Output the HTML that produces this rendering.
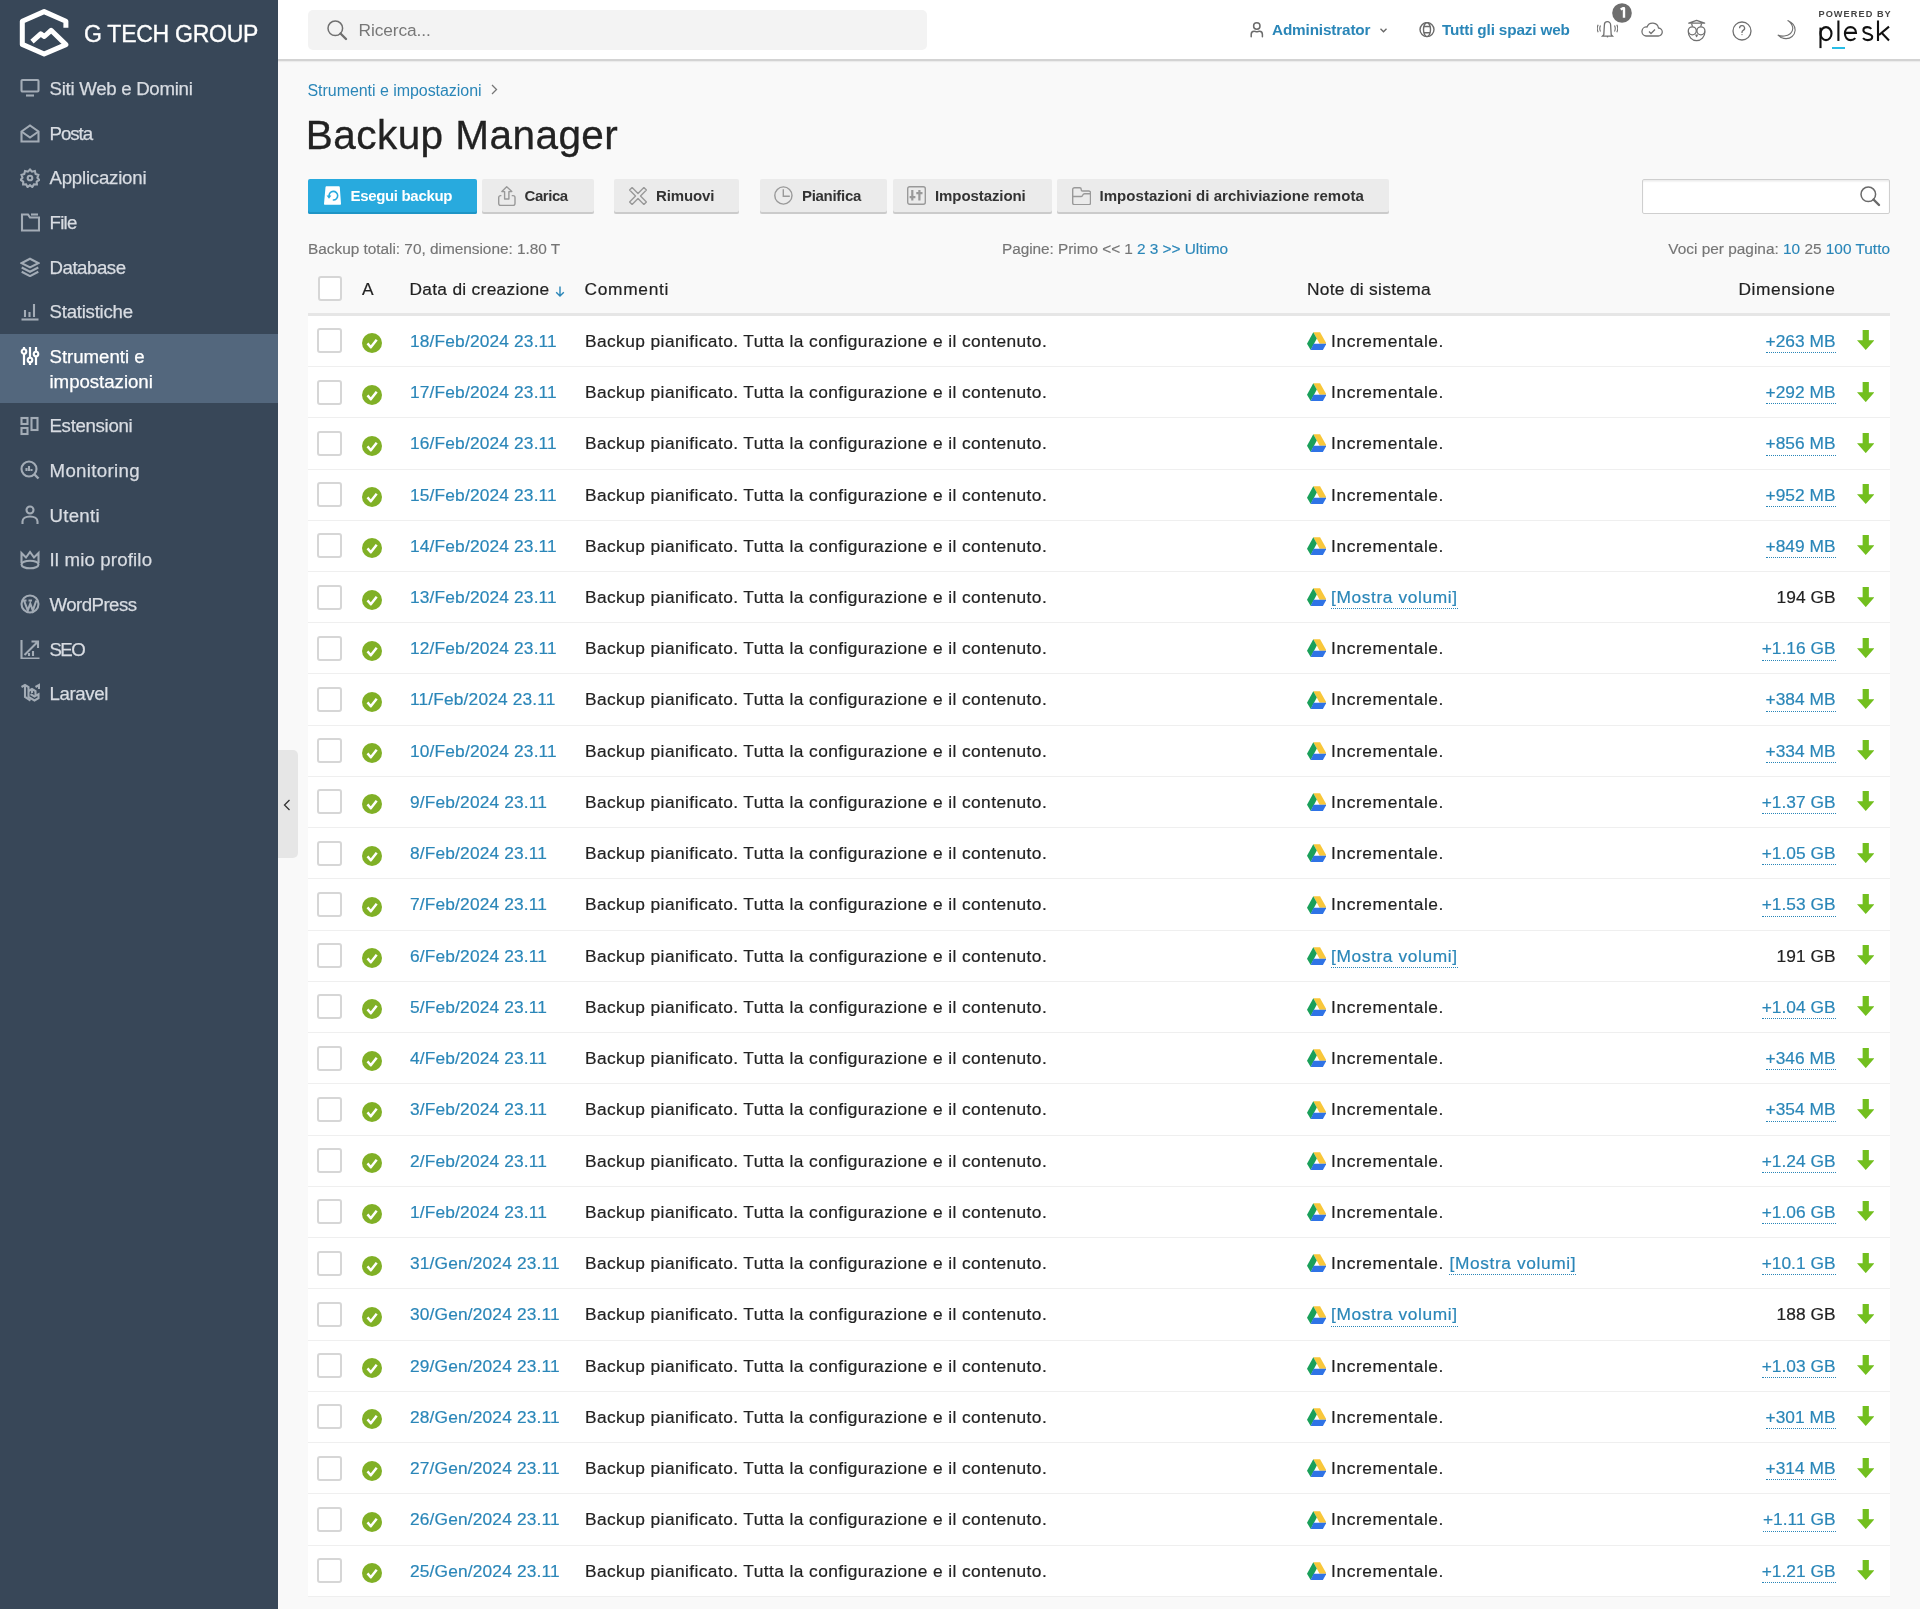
<!DOCTYPE html>
<html><head><meta charset="utf-8">
<style>
*{box-sizing:border-box;margin:0;padding:0}
html,body{width:1920px;height:1609px;overflow:hidden}
body{font-family:"Liberation Sans",sans-serif;background:#f9f9f9;position:relative;color:#222}
.abs{position:absolute}
#side{position:absolute;left:0;top:0;width:278px;height:1609px;background:#384758}
#hdr{position:absolute;left:278px;top:0;width:1642px;height:61px;background:#fff;border-bottom:2px solid #d3d3d3;box-shadow:0 1px 1px rgba(0,0,0,.05)}
.nav{position:absolute;left:0;width:278px;font-size:18.67px;letter-spacing:-0.3px}
.nav .t{position:absolute;left:49.5px;line-height:25px;white-space:nowrap;-webkit-text-stroke:0.25px currentColor}
.nav svg{position:absolute;left:20px;width:20px;height:20px}
.lnk{color:#2a86b8}
.hlink{color:#2a86b8;font-weight:bold;font-size:15.3px;letter-spacing:-0.15px;line-height:22px;white-space:nowrap}
#search{position:absolute;left:308px;top:10px;width:619px;height:40px;background:#f3f3f3;border-radius:5px}
.btn{position:absolute;top:179px;height:34.5px;background:#ebebeb;border-radius:2px;box-shadow:inset 0 -2px 0 #cbcbcb;color:#333;font-weight:bold;font-size:15px;letter-spacing:-0.1px}
.btn .bt{position:absolute;left:42.5px;top:8px;line-height:18px;white-space:nowrap}
.btn.pri{background:#28aade;box-shadow:inset 0 -2px 0 #1f95c6;color:#fff}
.info{position:absolute;top:239px;font-size:15.4px;color:#757575;line-height:20px;white-space:nowrap;-webkit-text-stroke:0.15px currentColor}
.th{position:absolute;top:278px;font-size:17.33px;color:#222;line-height:22px;white-space:nowrap;letter-spacing:0.3px;-webkit-text-stroke:0.2px currentColor}
.row{position:absolute;left:308px;width:1582px;height:51.24px;background:#fff;border-bottom:1.4px solid #efefef}
.cb{position:absolute;left:9.3px;width:24.8px;height:25px;border:2px solid #d6d6d6;border-radius:3px;background:#fff}
.row .ok{position:absolute;left:54px;top:17.5px;width:20px;height:20px}
.c{position:absolute;top:14px;font-size:17.33px;line-height:22px;white-space:nowrap;-webkit-text-stroke:0.2px currentColor}
.dt{left:102px;letter-spacing:0.16px}
.cm{left:277px;letter-spacing:0.42px;color:#222}
.gd{position:absolute;left:998.5px;top:16.2px;width:19.5px;height:18px}
.nt{left:1023px;letter-spacing:0.62px;color:#222}
.sz{right:54.5px;text-align:right;color:#222;letter-spacing:0.02px}
.dot{border-bottom:1.3px dotted #2a86b8;padding-bottom:1.3px}
.dl{position:absolute;left:1548.5px;top:14.5px;width:17.5px;height:20.6px}
</style></head>
<body>
<div id="wrap" style="position:absolute;left:0;top:0;width:1920px;height:1609px;overflow:hidden;will-change:transform">
<div id="side">
<svg class="abs" style="left:0;top:0" width="278" height="60" viewBox="0 0 278 60">
<path d="M65.9 27.8V21.2L44.1 11.6 22.3 21.2V44.4L44.1 54 65.9 44.6 51.1 30.3 44.3 36.5 40.7 33.9 32 41.6" fill="none" stroke="#fff" stroke-width="5" stroke-linejoin="round"/>
</svg>
<div class="abs" style="left:84px;top:20px;font-size:23px;color:#fff;letter-spacing:-0.25px;line-height:28px;white-space:nowrap;-webkit-text-stroke:0.35px #fff">G TECH GROUP</div>
<div class="nav" style="top:66.00px;height:44.63px;color:#d8dce2"><svg viewBox="0 0 20 20" style="top:12.3px" fill="none" stroke="#a3acb6" stroke-width="2.1"><rect x="1.5" y="2" width="17" height="11.5" rx="1"/><path d="M6 17.5h8"/></svg><div class="t" style="top:10px;letter-spacing:-0.29px">Siti Web e Domini</div></div>
<div class="nav" style="top:110.63px;height:44.63px;color:#d8dce2"><svg viewBox="0 0 20 20" style="top:12.3px" fill="none" stroke="#a3acb6" stroke-width="2.1"><path d="M1.5 8.5L10 2.5l8.5 6v10h-17z"/><path d="M1.5 8.5l8.5 6 8.5-6"/></svg><div class="t" style="top:10px;letter-spacing:-1.05px">Posta</div></div>
<div class="nav" style="top:155.26px;height:44.63px;color:#d8dce2"><svg viewBox="0 0 20 20" style="top:12.3px" fill="none" stroke="#a3acb6" stroke-width="2.1"><circle cx="10" cy="10" r="2.3"/><path d="M10 1.5l2 2.2 2.9-.7.7 2.9 2.8 1-1 2.8 1.9 2.3-2.6 1.5.2 3-3-.1-1.6 2.6-2.3-1.9-2.4 1.9-1.5-2.6-3 .1.1-3-2.6-1.5 1.9-2.3-1-2.8 2.8-1 .7-2.9 2.9.7z"/></svg><div class="t" style="top:10px;letter-spacing:-0.23px">Applicazioni</div></div>
<div class="nav" style="top:199.89px;height:44.63px;color:#d8dce2"><svg viewBox="0 0 20 20" style="top:12.3px" fill="none" stroke="#a3acb6" stroke-width="2.1"><path d="M2 2.5v16h17v-13h-9l-2-3z"/><path d="M11 2.5h7"/></svg><div class="t" style="top:10px;letter-spacing:-0.77px">File</div></div>
<div class="nav" style="top:244.52px;height:44.63px;color:#d8dce2"><svg viewBox="0 0 20 20" style="top:12.3px" fill="none" stroke="#a3acb6" stroke-width="2.1"><path d="M10 1.8l8.3 4.3-8.3 4.3-8.3-4.3z"/><path d="M1.7 10.5l8.3 4.3 8.3-4.3"/><path d="M1.7 14.8l8.3 4.3 8.3-4.3"/></svg><div class="t" style="top:10px;letter-spacing:-0.47px">Database</div></div>
<div class="nav" style="top:289.15px;height:44.63px;color:#d8dce2"><svg viewBox="0 0 20 20" style="top:12.3px" fill="none" stroke="#a3acb6" stroke-width="2.1"><path d="M1.5 18.5h17"/><path d="M5 16V9M9.5 16V11M14 16V3"/></svg><div class="t" style="top:10px;letter-spacing:-0.25px">Statistiche</div></div>
<div class="nav" style="top:333.78px;height:69.0px;background:#53677d;color:#ffffff"><svg viewBox="0 0 20 20" style="top:12.3px" fill="none" stroke="#ffffff" stroke-width="2.1"><path d="M4 1v18M10 1v18M16 1v18" stroke-width="2.2"/><circle cx="4" cy="5.5" r="2.3" fill="#53677d"/><circle cx="10" cy="14" r="2.3" fill="#53677d"/><circle cx="16" cy="8" r="2.3" fill="#53677d"/></svg><div class="t" style="top:10px;letter-spacing:-0.03px">Strumenti e<br>impostazioni</div></div>
<div class="nav" style="top:403.41px;height:44.63px;color:#d8dce2"><svg viewBox="0 0 20 20" style="top:12.3px" fill="none" stroke="#a3acb6" stroke-width="2.1"><rect x="1.5" y="2" width="6" height="6"/><rect x="1.5" y="12" width="6" height="6"/><rect x="11.5" y="2" width="6" height="12"/></svg><div class="t" style="top:10px;letter-spacing:-0.32px">Estensioni</div></div>
<div class="nav" style="top:448.04px;height:44.63px;color:#d8dce2"><svg viewBox="0 0 20 20" style="top:12.3px" fill="none" stroke="#a3acb6" stroke-width="2.1"><circle cx="9" cy="9" r="7.5"/><path d="M14.5 14.5l4 4" stroke-width="2.4"/><path d="M6.5 11V8M9 11V6M11.5 11V9"/></svg><div class="t" style="top:10px;letter-spacing:0.34px">Monitoring</div></div>
<div class="nav" style="top:492.67px;height:44.63px;color:#d8dce2"><svg viewBox="0 0 20 20" style="top:12.3px" fill="none" stroke="#a3acb6" stroke-width="2.1"><circle cx="10" cy="5" r="3.5"/><path d="M2.5 19v-2.5c0-3 3-5 7.5-5s7.5 2 7.5 5V19"/></svg><div class="t" style="top:10px;letter-spacing:0.26px">Utenti</div></div>
<div class="nav" style="top:537.30px;height:44.63px;color:#d8dce2"><svg viewBox="0 0 20 20" style="top:12.3px" fill="none" stroke="#a3acb6" stroke-width="2.1"><path d="M1.5 13V3l4.5 4.5L10 2l4 5.5L18.5 3v10"/><ellipse cx="10" cy="14.5" rx="8.5" ry="3.8"/></svg><div class="t" style="top:10px;letter-spacing:0.15px">Il mio profilo</div></div>
<div class="nav" style="top:581.93px;height:44.63px;color:#d8dce2"><svg viewBox="0 0 20 20" style="top:12.3px" fill="none" stroke="#a3acb6" stroke-width="2.1"><circle cx="10" cy="10" r="8.5"/><path d="M4 6.5l3.8 10 2.5-7 2.5 7 3.5-10M3 6.5h3.5M8.5 6.5h3.5"/></svg><div class="t" style="top:10px;letter-spacing:-0.55px">WordPress</div></div>
<div class="nav" style="top:626.56px;height:44.63px;color:#d8dce2"><svg viewBox="0 0 20 20" style="top:12.3px" fill="none" stroke="#a3acb6" stroke-width="2.1"><path d="M1.5 1v18.5h18"/><path d="M4.5 16L17.5 3M11.5 2.5h6.5V9"/><path d="M9 17v-3M13 17v-5"/></svg><div class="t" style="top:10px;letter-spacing:-1.60px">SEO</div></div>
<div class="nav" style="top:671.19px;height:44.63px;color:#d8dce2"><svg viewBox="0 0 20 20" style="top:12.3px" fill="none" stroke="#a3acb6" stroke-width="2.1"><path d="M1.5 4l3.5-2 3.5 2v10l6 3.5 4-2.3v-4l-4 2.3-4-2.3"/><path d="M5 2v12l5.5 3.5M8.5 8l3.5-2 3.5 2v4M12 6v4M15.5 4l3.5-2v4"/></svg><div class="t" style="top:10px;letter-spacing:-0.38px">Laravel</div></div>
</div>
<div id="hdr"></div>
<div id="search"></div>
<svg class="abs" style="left:327px;top:20px" width="21" height="21" viewBox="0 0 21 21" fill="none" stroke="#707070" stroke-width="1.5"><circle cx="8.3" cy="8.3" r="7.3"/><path d="M13.5 13.5l5.5 5.5" stroke-width="2.4" stroke-linecap="round"/></svg>
<div class="abs" style="left:358.5px;top:19px;font-size:17.33px;color:#777;line-height:22px;letter-spacing:-0.1px">Ricerca...</div>

<svg class="abs" style="left:1249px;top:22px" width="15" height="16" viewBox="0 0 15 16" fill="none" stroke="#6b6b6b" stroke-width="1.5" stroke-linecap="round"><circle cx="7.8" cy="4" r="3.2"/><path d="M2.2 14.7v-2.2c0-2.2 1.3-3.3 2.8-3.3 1 0 1.8.5 2.8.5s1.8-.5 2.8-.5c1.5 0 2.8 1.1 2.8 3.3v2.2"/></svg>
<div class="abs hlink" style="left:1272px;top:19px">Administrator</div>
<svg class="abs" style="left:1380px;top:28px" width="7" height="5" viewBox="0 0 7 5" fill="none" stroke="#666" stroke-width="1.3"><path d="M0.5 0.8l3 3 3-3"/></svg>
<svg class="abs" style="left:1419px;top:22px" width="16" height="16" viewBox="0 0 16 16" fill="none" stroke="#6b6b6b" stroke-width="1.4"><circle cx="8" cy="7.6" r="7"/><ellipse cx="8" cy="7.6" rx="3.5" ry="7"/><path d="M4.7 4.5h6.6M4.7 10.7h6.6"/></svg>
<div class="abs hlink" style="left:1442px;top:19px">Tutti gli spazi web</div>
<svg class="abs" style="left:1597px;top:20px" width="21" height="18" viewBox="0 0 21 18" fill="none" stroke="#707070" stroke-width="1.3"><path d="M6.8 14.8l.6-10a3.1 3.1 0 0 1 6.2 0l.6 10 1.3 1.3H5.5z"/><path d="M10.5 16.1v1.3"/><path d="M3.5 5.5c-.9 1.8-.9 4.2 0 6M1.2 4.8c-1.2 2.3-1.2 5.2 0 7.5M17.5 5.5c.9 1.8.9 4.2 0 6M19.8 4.8c1.2 2.3 1.2 5.2 0 7.5" stroke-width="1.1"/></svg>
<svg class="abs" style="left:1612px;top:2.5px" width="20" height="20" viewBox="0 0 20 20"><circle cx="10" cy="10" r="9.8" fill="#6e6e6e"/><path d="M8.7 6.6l2.2-1.4h1.1v9.6" fill="none" stroke="#fff" stroke-width="2.4" stroke-linejoin="round"/></svg>
<svg class="abs" style="left:1641px;top:22px" width="22" height="15" viewBox="0 0 22 15" fill="none" stroke="#707070" stroke-width="1.3"><path d="M5 14h12a4 4 0 0 0 .5-8 6 6 0 0 0-11.5-1A4.5 4.5 0 0 0 5 14z"/><path d="M8 9.5l2 2 4-4"/></svg>
<svg class="abs" style="left:1687px;top:19px" width="20" height="23" viewBox="0 0 20 23" fill="none" stroke="#707070" stroke-width="1.3" stroke-linejoin="round"><path d="M1.8 4.2L9.6 1.3 17.6 4.2z"/><path d="M4.6 4.6l.9 3M14.6 4.6l-.9 3"/><circle cx="5.3" cy="11.8" r="4"/><circle cx="13.9" cy="11.8" r="4"/><path d="M1.3 12.5C1.3 18 5 21.6 9.6 21.6S17.9 18 17.9 12.5"/><path d="M8.7 15.6l.9 2 .9-2"/></svg>
<svg class="abs" style="left:1732px;top:21px" width="20" height="20" viewBox="0 0 20 20" fill="none" stroke="#707070" stroke-width="1.3"><circle cx="10" cy="10" r="9"/><path d="M7.6 7.2a2.5 2.5 0 1 1 3.6 2.2c-.8.4-1.2.9-1.2 1.8v.9"/><circle cx="10" cy="13.6" r=".7" fill="#707070" stroke="none"/></svg>
<svg class="abs" style="left:1777px;top:20px" width="19" height="20" viewBox="0 0 19 20" fill="none" stroke="#707070" stroke-width="1.1"><path d="M10.6 0.4C15.5 2.5 18.3 6.5 18.1 10.5 17.8 15.5 13.5 18.8 8.8 18.6 5.5 18.5 2.5 17 0.8 15 4.5 16.8 10 16.5 13.5 13.5 16.8 10.3 17 5 10.6 0.4z"/></svg>
<div class="abs" style="left:1818.5px;top:8.5px;font-size:9.2px;letter-spacing:1.05px;color:#444;font-weight:bold;line-height:11px;white-space:nowrap">POWERED BY</div>
<svg class="abs" style="left:1810px;top:15px" width="90" height="40" viewBox="0 0 90 40" fill="none" stroke="#111" stroke-width="2.1"><path d="M10.5 33.1V12.6"/><ellipse cx="16" cy="18.6" rx="5.5" ry="6.5"/><path d="M28.4 5.5v20.4"/><path d="M34.9 17.9h11.1c0-3.4-2.4-5.8-5.5-5.8-3.3 0-5.6 2.9-5.6 6.5s2.4 6.5 5.8 6.5c2 0 3.5-.8 4.6-2"/><path transform="translate(-1.2 0)" d="M62.5 13.9c-.9-1-2.3-1.8-4-1.8-2.3 0-3.9 1.3-3.9 3.1 0 4.5 8.8 2.6 8.8 6.6 0 2-1.9 3.3-4.4 3.3-2 0-3.7-.8-4.8-2"/><path d="M68 5.5v20.4M79 11.6L69 20M71.6 17.8L79 25.4"/></svg>
<div class="abs" style="left:1832px;top:46.5px;width:13px;height:2px;background:#27bde6"></div>

<div class="abs lnk" style="left:307.5px;top:80.5px;font-size:16px;line-height:20px;letter-spacing:-0.05px;white-space:nowrap">Strumenti e impostazioni</div>
<svg class="abs" style="left:491px;top:84px" width="7" height="11" viewBox="0 0 7 11" fill="none" stroke="#777" stroke-width="1.3"><path d="M1 1l4.5 4.5L1 10"/></svg>
<div class="abs" style="left:305.8px;top:111px;font-size:40.5px;color:#222;line-height:48px;letter-spacing:0.45px;-webkit-text-stroke:0.3px #222;white-space:nowrap">Backup Manager</div>
<div class="btn pri" style="left:308px;width:169px"><svg class="abs" style="left:15.8px;top:7px" width="18" height="19" viewBox="0 0 18 19"><path d="M2.6 0.2h12.1c.6 0 1.1.5 1.1 1.1l1.2 16.5c0 .6-.4 1-1 1H1c-.6 0-1-.4-1-1L1.5 1.3c0-.6.5-1.1 1.1-1.1z" fill="#fff"/><path d="M9.4 14A4.3 4.3 0 1 0 5.1 10" fill="none" stroke="#28aade" stroke-width="1.6" stroke-linecap="round"/><path d="M2.6 9.5h4.8L5 12.8z" fill="#28aade"/></svg><span class="bt" style="letter-spacing:-0.33px">Esegui backup</span></div><div class="btn" style="left:482px;width:112px"><svg class="abs" style="left:16px;top:7px" width="18" height="20" viewBox="0 0 18 20" fill="none" stroke="#999" stroke-width="1.4" stroke-linejoin="round"><path d="M8.7 0.8L3.9 5.6h2.7v7.4h4.3V5.6h2.9z"/><path d="M3.4 9.6H2.7a2 2 0 0 0-2 2v5.9a2 2 0 0 0 2 2h12.3a2 2 0 0 0 2-2v-5.9a2 2 0 0 0-2-2h-1.3"/></svg><span class="bt" style="letter-spacing:-0.45px">Carica</span></div><div class="btn" style="left:613.5px;width:125.5px"><svg class="abs" style="left:15.5px;top:8px" width="18" height="18" viewBox="0 0 18 18" fill="none" stroke="#999" stroke-width="1.4" stroke-linejoin="round"><path d="M3.1 0.6 9.0 6.5 14.9 0.6 17.4 3.1 11.5 9.0 17.4 14.9 14.9 17.4 9.0 11.5 3.1 17.4 0.6 14.9 6.5 9.0 0.6 3.1z"/></svg><span class="bt" style="letter-spacing:-0.12px">Rimuovi</span></div><div class="btn" style="left:759.5px;width:127.5px"><svg class="abs" style="left:14.5px;top:6.5px" width="19" height="19" viewBox="0 0 19 19" fill="none" stroke="#999" stroke-width="1.4"><circle cx="9.4" cy="9.5" r="8.6"/><path d="M9.3 3.2v7h6.5"/></svg><span class="bt" style="letter-spacing:-0.3px">Pianifica</span></div><div class="btn" style="left:892.5px;width:159px"><svg class="abs" style="left:14.5px;top:7px" width="19" height="19" viewBox="0 0 19 19" fill="none" stroke="#999" stroke-width="1.4"><rect x="0.7" y="0.7" width="17.6" height="17.6" rx="2"/><path d="M5.3 4v10.6M12.4 4v10.6" stroke-width="2.2"/><path d="M2.6 11.1h5.8M9.3 7.1h6.2" stroke-width="2.2"/></svg><span class="bt" style="letter-spacing:-0.08px">Impostazioni</span></div><div class="btn" style="left:1057px;width:332px"><svg class="abs" style="left:14.7px;top:8px" width="19" height="18" viewBox="0 0 19 18" fill="none" stroke="#999" stroke-width="1.4"><path d="M0.7 2.5a1.8 1.8 0 0 1 1.8-1.8h5.2a1.5 1.5 0 0 1 1.5 1.5v.5a1.3 1.3 0 0 0 1.3 1.3h6.2a1.8 1.8 0 0 1 1.8 1.8v10.1a1.8 1.8 0 0 1-1.8 1.8H2.5a1.8 1.8 0 0 1-1.8-1.8z"/><path d="M0.7 9.5h8.3c.8 0 1.2-.5 1.6-1.2.5-1 1-1.6 2-1.6h5.7"/></svg><span class="bt" style="letter-spacing:0.05px">Impostazioni di archiviazione remota</span></div>
<div class="abs" style="left:1641.8px;top:179px;width:248.2px;height:34.5px;background:#fff;border:1.4px solid #cfcfcf;border-radius:2px;box-shadow:inset 0 1.5px 1.5px rgba(0,0,0,.08)"></div>
<svg class="abs" style="left:1860px;top:186px" width="21" height="21" viewBox="0 0 21 21" fill="none" stroke="#6a6a6a" stroke-width="1.5"><circle cx="8.3" cy="8.3" r="7.3"/><path d="M13.5 13.5l5.5 5.5" stroke-width="2.4" stroke-linecap="round"/></svg>
<div class="info" style="left:308px;letter-spacing:-0.02px">Backup totali: 70, dimensione: 1.80 T</div>
<div class="info" style="left:1002px;letter-spacing:-0.05px">Pagine: Primo &lt;&lt; 1 <span class="lnk">2</span> <span class="lnk">3</span> <span class="lnk">&gt;&gt;</span> <span class="lnk">Ultimo</span></div>
<div class="info" style="right:30px;letter-spacing:0.0px">Voci per pagina: <span class="lnk">10</span> 25 <span class="lnk">100</span> <span class="lnk">Tutto</span></div>
<div class="cb" style="left:317.5px;top:275.5px;position:absolute"></div>
<div class="th" style="left:362px">A</div>
<div class="th" style="left:409.5px">Data di creazione</div>
<svg class="abs" style="left:555px;top:285.5px" width="10" height="11" viewBox="0 0 10 11" fill="none" stroke="#2a86b8" stroke-width="1.4"><path d="M5 0.5v9.5M1.2 6.3L5 10 8.8 6.3"/></svg>
<div class="th" style="left:584.5px;letter-spacing:0.7px">Commenti</div>
<div class="th" style="left:1307px">Note di sistema</div>
<div class="th" style="right:84.5px;letter-spacing:0.55px">Dimensione</div>
<div class="abs" style="left:308px;top:313.3px;width:1582px;height:2.5px;background:#e6e6e6"></div>
<div class="row" style="top:315.80px"><div class="cb" style="top:12.5px"></div><svg class="ok" viewBox="0 0 20 20"><circle cx="10" cy="10" r="10" fill="#80b026"/><path d="M5.5 10.4l3.3 3.8 5.9-7.5" fill="none" stroke="#fff" stroke-width="2.5" stroke-linejoin="round"/></svg><div class="c dt lnk">18/Feb/2024 23.11</div><div class="c cm">Backup pianificato. Tutta la configurazione e il contenuto.</div><svg class="gd" viewBox="0 0 19.5 18"><path d="M6.3 0.3h6.8l6.4 11.4h-6.9z" fill="#f9c73a"/><path d="M6.3 0.3L9.8 6.4 3.7 18 0 11.7z" fill="#1aa05a"/><path d="M6.5 11.7h13l-3.6 6.3H3.7z" fill="#2f73e6"/></svg><div class="c nt">Incrementale.</div><div class="c sz"><span class="dot lnk">+263 MB</span></div><svg class="dl" viewBox="0 0 18 21"><path d="M5.8 0h6.4v10.5H18L9 20.6 0 10.5h5.8z" fill="#72bf1e"/></svg></div>
<div class="row" style="top:367.04px"><div class="cb" style="top:12.5px"></div><svg class="ok" viewBox="0 0 20 20"><circle cx="10" cy="10" r="10" fill="#80b026"/><path d="M5.5 10.4l3.3 3.8 5.9-7.5" fill="none" stroke="#fff" stroke-width="2.5" stroke-linejoin="round"/></svg><div class="c dt lnk">17/Feb/2024 23.11</div><div class="c cm">Backup pianificato. Tutta la configurazione e il contenuto.</div><svg class="gd" viewBox="0 0 19.5 18"><path d="M6.3 0.3h6.8l6.4 11.4h-6.9z" fill="#f9c73a"/><path d="M6.3 0.3L9.8 6.4 3.7 18 0 11.7z" fill="#1aa05a"/><path d="M6.5 11.7h13l-3.6 6.3H3.7z" fill="#2f73e6"/></svg><div class="c nt">Incrementale.</div><div class="c sz"><span class="dot lnk">+292 MB</span></div><svg class="dl" viewBox="0 0 18 21"><path d="M5.8 0h6.4v10.5H18L9 20.6 0 10.5h5.8z" fill="#72bf1e"/></svg></div>
<div class="row" style="top:418.28px"><div class="cb" style="top:12.5px"></div><svg class="ok" viewBox="0 0 20 20"><circle cx="10" cy="10" r="10" fill="#80b026"/><path d="M5.5 10.4l3.3 3.8 5.9-7.5" fill="none" stroke="#fff" stroke-width="2.5" stroke-linejoin="round"/></svg><div class="c dt lnk">16/Feb/2024 23.11</div><div class="c cm">Backup pianificato. Tutta la configurazione e il contenuto.</div><svg class="gd" viewBox="0 0 19.5 18"><path d="M6.3 0.3h6.8l6.4 11.4h-6.9z" fill="#f9c73a"/><path d="M6.3 0.3L9.8 6.4 3.7 18 0 11.7z" fill="#1aa05a"/><path d="M6.5 11.7h13l-3.6 6.3H3.7z" fill="#2f73e6"/></svg><div class="c nt">Incrementale.</div><div class="c sz"><span class="dot lnk">+856 MB</span></div><svg class="dl" viewBox="0 0 18 21"><path d="M5.8 0h6.4v10.5H18L9 20.6 0 10.5h5.8z" fill="#72bf1e"/></svg></div>
<div class="row" style="top:469.52px"><div class="cb" style="top:12.5px"></div><svg class="ok" viewBox="0 0 20 20"><circle cx="10" cy="10" r="10" fill="#80b026"/><path d="M5.5 10.4l3.3 3.8 5.9-7.5" fill="none" stroke="#fff" stroke-width="2.5" stroke-linejoin="round"/></svg><div class="c dt lnk">15/Feb/2024 23.11</div><div class="c cm">Backup pianificato. Tutta la configurazione e il contenuto.</div><svg class="gd" viewBox="0 0 19.5 18"><path d="M6.3 0.3h6.8l6.4 11.4h-6.9z" fill="#f9c73a"/><path d="M6.3 0.3L9.8 6.4 3.7 18 0 11.7z" fill="#1aa05a"/><path d="M6.5 11.7h13l-3.6 6.3H3.7z" fill="#2f73e6"/></svg><div class="c nt">Incrementale.</div><div class="c sz"><span class="dot lnk">+952 MB</span></div><svg class="dl" viewBox="0 0 18 21"><path d="M5.8 0h6.4v10.5H18L9 20.6 0 10.5h5.8z" fill="#72bf1e"/></svg></div>
<div class="row" style="top:520.76px"><div class="cb" style="top:12.5px"></div><svg class="ok" viewBox="0 0 20 20"><circle cx="10" cy="10" r="10" fill="#80b026"/><path d="M5.5 10.4l3.3 3.8 5.9-7.5" fill="none" stroke="#fff" stroke-width="2.5" stroke-linejoin="round"/></svg><div class="c dt lnk">14/Feb/2024 23.11</div><div class="c cm">Backup pianificato. Tutta la configurazione e il contenuto.</div><svg class="gd" viewBox="0 0 19.5 18"><path d="M6.3 0.3h6.8l6.4 11.4h-6.9z" fill="#f9c73a"/><path d="M6.3 0.3L9.8 6.4 3.7 18 0 11.7z" fill="#1aa05a"/><path d="M6.5 11.7h13l-3.6 6.3H3.7z" fill="#2f73e6"/></svg><div class="c nt">Incrementale.</div><div class="c sz"><span class="dot lnk">+849 MB</span></div><svg class="dl" viewBox="0 0 18 21"><path d="M5.8 0h6.4v10.5H18L9 20.6 0 10.5h5.8z" fill="#72bf1e"/></svg></div>
<div class="row" style="top:572.00px"><div class="cb" style="top:12.5px"></div><svg class="ok" viewBox="0 0 20 20"><circle cx="10" cy="10" r="10" fill="#80b026"/><path d="M5.5 10.4l3.3 3.8 5.9-7.5" fill="none" stroke="#fff" stroke-width="2.5" stroke-linejoin="round"/></svg><div class="c dt lnk">13/Feb/2024 23.11</div><div class="c cm">Backup pianificato. Tutta la configurazione e il contenuto.</div><svg class="gd" viewBox="0 0 19.5 18"><path d="M6.3 0.3h6.8l6.4 11.4h-6.9z" fill="#f9c73a"/><path d="M6.3 0.3L9.8 6.4 3.7 18 0 11.7z" fill="#1aa05a"/><path d="M6.5 11.7h13l-3.6 6.3H3.7z" fill="#2f73e6"/></svg><div class="c nt"><span class="dot lnk">[Mostra volumi]</span></div><div class="c sz">194 GB</div><svg class="dl" viewBox="0 0 18 21"><path d="M5.8 0h6.4v10.5H18L9 20.6 0 10.5h5.8z" fill="#72bf1e"/></svg></div>
<div class="row" style="top:623.24px"><div class="cb" style="top:12.5px"></div><svg class="ok" viewBox="0 0 20 20"><circle cx="10" cy="10" r="10" fill="#80b026"/><path d="M5.5 10.4l3.3 3.8 5.9-7.5" fill="none" stroke="#fff" stroke-width="2.5" stroke-linejoin="round"/></svg><div class="c dt lnk">12/Feb/2024 23.11</div><div class="c cm">Backup pianificato. Tutta la configurazione e il contenuto.</div><svg class="gd" viewBox="0 0 19.5 18"><path d="M6.3 0.3h6.8l6.4 11.4h-6.9z" fill="#f9c73a"/><path d="M6.3 0.3L9.8 6.4 3.7 18 0 11.7z" fill="#1aa05a"/><path d="M6.5 11.7h13l-3.6 6.3H3.7z" fill="#2f73e6"/></svg><div class="c nt">Incrementale.</div><div class="c sz"><span class="dot lnk">+1.16 GB</span></div><svg class="dl" viewBox="0 0 18 21"><path d="M5.8 0h6.4v10.5H18L9 20.6 0 10.5h5.8z" fill="#72bf1e"/></svg></div>
<div class="row" style="top:674.48px"><div class="cb" style="top:12.5px"></div><svg class="ok" viewBox="0 0 20 20"><circle cx="10" cy="10" r="10" fill="#80b026"/><path d="M5.5 10.4l3.3 3.8 5.9-7.5" fill="none" stroke="#fff" stroke-width="2.5" stroke-linejoin="round"/></svg><div class="c dt lnk">11/Feb/2024 23.11</div><div class="c cm">Backup pianificato. Tutta la configurazione e il contenuto.</div><svg class="gd" viewBox="0 0 19.5 18"><path d="M6.3 0.3h6.8l6.4 11.4h-6.9z" fill="#f9c73a"/><path d="M6.3 0.3L9.8 6.4 3.7 18 0 11.7z" fill="#1aa05a"/><path d="M6.5 11.7h13l-3.6 6.3H3.7z" fill="#2f73e6"/></svg><div class="c nt">Incrementale.</div><div class="c sz"><span class="dot lnk">+384 MB</span></div><svg class="dl" viewBox="0 0 18 21"><path d="M5.8 0h6.4v10.5H18L9 20.6 0 10.5h5.8z" fill="#72bf1e"/></svg></div>
<div class="row" style="top:725.72px"><div class="cb" style="top:12.5px"></div><svg class="ok" viewBox="0 0 20 20"><circle cx="10" cy="10" r="10" fill="#80b026"/><path d="M5.5 10.4l3.3 3.8 5.9-7.5" fill="none" stroke="#fff" stroke-width="2.5" stroke-linejoin="round"/></svg><div class="c dt lnk">10/Feb/2024 23.11</div><div class="c cm">Backup pianificato. Tutta la configurazione e il contenuto.</div><svg class="gd" viewBox="0 0 19.5 18"><path d="M6.3 0.3h6.8l6.4 11.4h-6.9z" fill="#f9c73a"/><path d="M6.3 0.3L9.8 6.4 3.7 18 0 11.7z" fill="#1aa05a"/><path d="M6.5 11.7h13l-3.6 6.3H3.7z" fill="#2f73e6"/></svg><div class="c nt">Incrementale.</div><div class="c sz"><span class="dot lnk">+334 MB</span></div><svg class="dl" viewBox="0 0 18 21"><path d="M5.8 0h6.4v10.5H18L9 20.6 0 10.5h5.8z" fill="#72bf1e"/></svg></div>
<div class="row" style="top:776.96px"><div class="cb" style="top:12.5px"></div><svg class="ok" viewBox="0 0 20 20"><circle cx="10" cy="10" r="10" fill="#80b026"/><path d="M5.5 10.4l3.3 3.8 5.9-7.5" fill="none" stroke="#fff" stroke-width="2.5" stroke-linejoin="round"/></svg><div class="c dt lnk">9/Feb/2024 23.11</div><div class="c cm">Backup pianificato. Tutta la configurazione e il contenuto.</div><svg class="gd" viewBox="0 0 19.5 18"><path d="M6.3 0.3h6.8l6.4 11.4h-6.9z" fill="#f9c73a"/><path d="M6.3 0.3L9.8 6.4 3.7 18 0 11.7z" fill="#1aa05a"/><path d="M6.5 11.7h13l-3.6 6.3H3.7z" fill="#2f73e6"/></svg><div class="c nt">Incrementale.</div><div class="c sz"><span class="dot lnk">+1.37 GB</span></div><svg class="dl" viewBox="0 0 18 21"><path d="M5.8 0h6.4v10.5H18L9 20.6 0 10.5h5.8z" fill="#72bf1e"/></svg></div>
<div class="row" style="top:828.20px"><div class="cb" style="top:12.5px"></div><svg class="ok" viewBox="0 0 20 20"><circle cx="10" cy="10" r="10" fill="#80b026"/><path d="M5.5 10.4l3.3 3.8 5.9-7.5" fill="none" stroke="#fff" stroke-width="2.5" stroke-linejoin="round"/></svg><div class="c dt lnk">8/Feb/2024 23.11</div><div class="c cm">Backup pianificato. Tutta la configurazione e il contenuto.</div><svg class="gd" viewBox="0 0 19.5 18"><path d="M6.3 0.3h6.8l6.4 11.4h-6.9z" fill="#f9c73a"/><path d="M6.3 0.3L9.8 6.4 3.7 18 0 11.7z" fill="#1aa05a"/><path d="M6.5 11.7h13l-3.6 6.3H3.7z" fill="#2f73e6"/></svg><div class="c nt">Incrementale.</div><div class="c sz"><span class="dot lnk">+1.05 GB</span></div><svg class="dl" viewBox="0 0 18 21"><path d="M5.8 0h6.4v10.5H18L9 20.6 0 10.5h5.8z" fill="#72bf1e"/></svg></div>
<div class="row" style="top:879.44px"><div class="cb" style="top:12.5px"></div><svg class="ok" viewBox="0 0 20 20"><circle cx="10" cy="10" r="10" fill="#80b026"/><path d="M5.5 10.4l3.3 3.8 5.9-7.5" fill="none" stroke="#fff" stroke-width="2.5" stroke-linejoin="round"/></svg><div class="c dt lnk">7/Feb/2024 23.11</div><div class="c cm">Backup pianificato. Tutta la configurazione e il contenuto.</div><svg class="gd" viewBox="0 0 19.5 18"><path d="M6.3 0.3h6.8l6.4 11.4h-6.9z" fill="#f9c73a"/><path d="M6.3 0.3L9.8 6.4 3.7 18 0 11.7z" fill="#1aa05a"/><path d="M6.5 11.7h13l-3.6 6.3H3.7z" fill="#2f73e6"/></svg><div class="c nt">Incrementale.</div><div class="c sz"><span class="dot lnk">+1.53 GB</span></div><svg class="dl" viewBox="0 0 18 21"><path d="M5.8 0h6.4v10.5H18L9 20.6 0 10.5h5.8z" fill="#72bf1e"/></svg></div>
<div class="row" style="top:930.68px"><div class="cb" style="top:12.5px"></div><svg class="ok" viewBox="0 0 20 20"><circle cx="10" cy="10" r="10" fill="#80b026"/><path d="M5.5 10.4l3.3 3.8 5.9-7.5" fill="none" stroke="#fff" stroke-width="2.5" stroke-linejoin="round"/></svg><div class="c dt lnk">6/Feb/2024 23.11</div><div class="c cm">Backup pianificato. Tutta la configurazione e il contenuto.</div><svg class="gd" viewBox="0 0 19.5 18"><path d="M6.3 0.3h6.8l6.4 11.4h-6.9z" fill="#f9c73a"/><path d="M6.3 0.3L9.8 6.4 3.7 18 0 11.7z" fill="#1aa05a"/><path d="M6.5 11.7h13l-3.6 6.3H3.7z" fill="#2f73e6"/></svg><div class="c nt"><span class="dot lnk">[Mostra volumi]</span></div><div class="c sz">191 GB</div><svg class="dl" viewBox="0 0 18 21"><path d="M5.8 0h6.4v10.5H18L9 20.6 0 10.5h5.8z" fill="#72bf1e"/></svg></div>
<div class="row" style="top:981.92px"><div class="cb" style="top:12.5px"></div><svg class="ok" viewBox="0 0 20 20"><circle cx="10" cy="10" r="10" fill="#80b026"/><path d="M5.5 10.4l3.3 3.8 5.9-7.5" fill="none" stroke="#fff" stroke-width="2.5" stroke-linejoin="round"/></svg><div class="c dt lnk">5/Feb/2024 23.11</div><div class="c cm">Backup pianificato. Tutta la configurazione e il contenuto.</div><svg class="gd" viewBox="0 0 19.5 18"><path d="M6.3 0.3h6.8l6.4 11.4h-6.9z" fill="#f9c73a"/><path d="M6.3 0.3L9.8 6.4 3.7 18 0 11.7z" fill="#1aa05a"/><path d="M6.5 11.7h13l-3.6 6.3H3.7z" fill="#2f73e6"/></svg><div class="c nt">Incrementale.</div><div class="c sz"><span class="dot lnk">+1.04 GB</span></div><svg class="dl" viewBox="0 0 18 21"><path d="M5.8 0h6.4v10.5H18L9 20.6 0 10.5h5.8z" fill="#72bf1e"/></svg></div>
<div class="row" style="top:1033.16px"><div class="cb" style="top:12.5px"></div><svg class="ok" viewBox="0 0 20 20"><circle cx="10" cy="10" r="10" fill="#80b026"/><path d="M5.5 10.4l3.3 3.8 5.9-7.5" fill="none" stroke="#fff" stroke-width="2.5" stroke-linejoin="round"/></svg><div class="c dt lnk">4/Feb/2024 23.11</div><div class="c cm">Backup pianificato. Tutta la configurazione e il contenuto.</div><svg class="gd" viewBox="0 0 19.5 18"><path d="M6.3 0.3h6.8l6.4 11.4h-6.9z" fill="#f9c73a"/><path d="M6.3 0.3L9.8 6.4 3.7 18 0 11.7z" fill="#1aa05a"/><path d="M6.5 11.7h13l-3.6 6.3H3.7z" fill="#2f73e6"/></svg><div class="c nt">Incrementale.</div><div class="c sz"><span class="dot lnk">+346 MB</span></div><svg class="dl" viewBox="0 0 18 21"><path d="M5.8 0h6.4v10.5H18L9 20.6 0 10.5h5.8z" fill="#72bf1e"/></svg></div>
<div class="row" style="top:1084.40px"><div class="cb" style="top:12.5px"></div><svg class="ok" viewBox="0 0 20 20"><circle cx="10" cy="10" r="10" fill="#80b026"/><path d="M5.5 10.4l3.3 3.8 5.9-7.5" fill="none" stroke="#fff" stroke-width="2.5" stroke-linejoin="round"/></svg><div class="c dt lnk">3/Feb/2024 23.11</div><div class="c cm">Backup pianificato. Tutta la configurazione e il contenuto.</div><svg class="gd" viewBox="0 0 19.5 18"><path d="M6.3 0.3h6.8l6.4 11.4h-6.9z" fill="#f9c73a"/><path d="M6.3 0.3L9.8 6.4 3.7 18 0 11.7z" fill="#1aa05a"/><path d="M6.5 11.7h13l-3.6 6.3H3.7z" fill="#2f73e6"/></svg><div class="c nt">Incrementale.</div><div class="c sz"><span class="dot lnk">+354 MB</span></div><svg class="dl" viewBox="0 0 18 21"><path d="M5.8 0h6.4v10.5H18L9 20.6 0 10.5h5.8z" fill="#72bf1e"/></svg></div>
<div class="row" style="top:1135.64px"><div class="cb" style="top:12.5px"></div><svg class="ok" viewBox="0 0 20 20"><circle cx="10" cy="10" r="10" fill="#80b026"/><path d="M5.5 10.4l3.3 3.8 5.9-7.5" fill="none" stroke="#fff" stroke-width="2.5" stroke-linejoin="round"/></svg><div class="c dt lnk">2/Feb/2024 23.11</div><div class="c cm">Backup pianificato. Tutta la configurazione e il contenuto.</div><svg class="gd" viewBox="0 0 19.5 18"><path d="M6.3 0.3h6.8l6.4 11.4h-6.9z" fill="#f9c73a"/><path d="M6.3 0.3L9.8 6.4 3.7 18 0 11.7z" fill="#1aa05a"/><path d="M6.5 11.7h13l-3.6 6.3H3.7z" fill="#2f73e6"/></svg><div class="c nt">Incrementale.</div><div class="c sz"><span class="dot lnk">+1.24 GB</span></div><svg class="dl" viewBox="0 0 18 21"><path d="M5.8 0h6.4v10.5H18L9 20.6 0 10.5h5.8z" fill="#72bf1e"/></svg></div>
<div class="row" style="top:1186.88px"><div class="cb" style="top:12.5px"></div><svg class="ok" viewBox="0 0 20 20"><circle cx="10" cy="10" r="10" fill="#80b026"/><path d="M5.5 10.4l3.3 3.8 5.9-7.5" fill="none" stroke="#fff" stroke-width="2.5" stroke-linejoin="round"/></svg><div class="c dt lnk">1/Feb/2024 23.11</div><div class="c cm">Backup pianificato. Tutta la configurazione e il contenuto.</div><svg class="gd" viewBox="0 0 19.5 18"><path d="M6.3 0.3h6.8l6.4 11.4h-6.9z" fill="#f9c73a"/><path d="M6.3 0.3L9.8 6.4 3.7 18 0 11.7z" fill="#1aa05a"/><path d="M6.5 11.7h13l-3.6 6.3H3.7z" fill="#2f73e6"/></svg><div class="c nt">Incrementale.</div><div class="c sz"><span class="dot lnk">+1.06 GB</span></div><svg class="dl" viewBox="0 0 18 21"><path d="M5.8 0h6.4v10.5H18L9 20.6 0 10.5h5.8z" fill="#72bf1e"/></svg></div>
<div class="row" style="top:1238.12px"><div class="cb" style="top:12.5px"></div><svg class="ok" viewBox="0 0 20 20"><circle cx="10" cy="10" r="10" fill="#80b026"/><path d="M5.5 10.4l3.3 3.8 5.9-7.5" fill="none" stroke="#fff" stroke-width="2.5" stroke-linejoin="round"/></svg><div class="c dt lnk">31/Gen/2024 23.11</div><div class="c cm">Backup pianificato. Tutta la configurazione e il contenuto.</div><svg class="gd" viewBox="0 0 19.5 18"><path d="M6.3 0.3h6.8l6.4 11.4h-6.9z" fill="#f9c73a"/><path d="M6.3 0.3L9.8 6.4 3.7 18 0 11.7z" fill="#1aa05a"/><path d="M6.5 11.7h13l-3.6 6.3H3.7z" fill="#2f73e6"/></svg><div class="c nt">Incrementale. <span class="dot lnk">[Mostra volumi]</span></div><div class="c sz"><span class="dot lnk">+10.1 GB</span></div><svg class="dl" viewBox="0 0 18 21"><path d="M5.8 0h6.4v10.5H18L9 20.6 0 10.5h5.8z" fill="#72bf1e"/></svg></div>
<div class="row" style="top:1289.36px"><div class="cb" style="top:12.5px"></div><svg class="ok" viewBox="0 0 20 20"><circle cx="10" cy="10" r="10" fill="#80b026"/><path d="M5.5 10.4l3.3 3.8 5.9-7.5" fill="none" stroke="#fff" stroke-width="2.5" stroke-linejoin="round"/></svg><div class="c dt lnk">30/Gen/2024 23.11</div><div class="c cm">Backup pianificato. Tutta la configurazione e il contenuto.</div><svg class="gd" viewBox="0 0 19.5 18"><path d="M6.3 0.3h6.8l6.4 11.4h-6.9z" fill="#f9c73a"/><path d="M6.3 0.3L9.8 6.4 3.7 18 0 11.7z" fill="#1aa05a"/><path d="M6.5 11.7h13l-3.6 6.3H3.7z" fill="#2f73e6"/></svg><div class="c nt"><span class="dot lnk">[Mostra volumi]</span></div><div class="c sz">188 GB</div><svg class="dl" viewBox="0 0 18 21"><path d="M5.8 0h6.4v10.5H18L9 20.6 0 10.5h5.8z" fill="#72bf1e"/></svg></div>
<div class="row" style="top:1340.60px"><div class="cb" style="top:12.5px"></div><svg class="ok" viewBox="0 0 20 20"><circle cx="10" cy="10" r="10" fill="#80b026"/><path d="M5.5 10.4l3.3 3.8 5.9-7.5" fill="none" stroke="#fff" stroke-width="2.5" stroke-linejoin="round"/></svg><div class="c dt lnk">29/Gen/2024 23.11</div><div class="c cm">Backup pianificato. Tutta la configurazione e il contenuto.</div><svg class="gd" viewBox="0 0 19.5 18"><path d="M6.3 0.3h6.8l6.4 11.4h-6.9z" fill="#f9c73a"/><path d="M6.3 0.3L9.8 6.4 3.7 18 0 11.7z" fill="#1aa05a"/><path d="M6.5 11.7h13l-3.6 6.3H3.7z" fill="#2f73e6"/></svg><div class="c nt">Incrementale.</div><div class="c sz"><span class="dot lnk">+1.03 GB</span></div><svg class="dl" viewBox="0 0 18 21"><path d="M5.8 0h6.4v10.5H18L9 20.6 0 10.5h5.8z" fill="#72bf1e"/></svg></div>
<div class="row" style="top:1391.84px"><div class="cb" style="top:12.5px"></div><svg class="ok" viewBox="0 0 20 20"><circle cx="10" cy="10" r="10" fill="#80b026"/><path d="M5.5 10.4l3.3 3.8 5.9-7.5" fill="none" stroke="#fff" stroke-width="2.5" stroke-linejoin="round"/></svg><div class="c dt lnk">28/Gen/2024 23.11</div><div class="c cm">Backup pianificato. Tutta la configurazione e il contenuto.</div><svg class="gd" viewBox="0 0 19.5 18"><path d="M6.3 0.3h6.8l6.4 11.4h-6.9z" fill="#f9c73a"/><path d="M6.3 0.3L9.8 6.4 3.7 18 0 11.7z" fill="#1aa05a"/><path d="M6.5 11.7h13l-3.6 6.3H3.7z" fill="#2f73e6"/></svg><div class="c nt">Incrementale.</div><div class="c sz"><span class="dot lnk">+301 MB</span></div><svg class="dl" viewBox="0 0 18 21"><path d="M5.8 0h6.4v10.5H18L9 20.6 0 10.5h5.8z" fill="#72bf1e"/></svg></div>
<div class="row" style="top:1443.08px"><div class="cb" style="top:12.5px"></div><svg class="ok" viewBox="0 0 20 20"><circle cx="10" cy="10" r="10" fill="#80b026"/><path d="M5.5 10.4l3.3 3.8 5.9-7.5" fill="none" stroke="#fff" stroke-width="2.5" stroke-linejoin="round"/></svg><div class="c dt lnk">27/Gen/2024 23.11</div><div class="c cm">Backup pianificato. Tutta la configurazione e il contenuto.</div><svg class="gd" viewBox="0 0 19.5 18"><path d="M6.3 0.3h6.8l6.4 11.4h-6.9z" fill="#f9c73a"/><path d="M6.3 0.3L9.8 6.4 3.7 18 0 11.7z" fill="#1aa05a"/><path d="M6.5 11.7h13l-3.6 6.3H3.7z" fill="#2f73e6"/></svg><div class="c nt">Incrementale.</div><div class="c sz"><span class="dot lnk">+314 MB</span></div><svg class="dl" viewBox="0 0 18 21"><path d="M5.8 0h6.4v10.5H18L9 20.6 0 10.5h5.8z" fill="#72bf1e"/></svg></div>
<div class="row" style="top:1494.32px"><div class="cb" style="top:12.5px"></div><svg class="ok" viewBox="0 0 20 20"><circle cx="10" cy="10" r="10" fill="#80b026"/><path d="M5.5 10.4l3.3 3.8 5.9-7.5" fill="none" stroke="#fff" stroke-width="2.5" stroke-linejoin="round"/></svg><div class="c dt lnk">26/Gen/2024 23.11</div><div class="c cm">Backup pianificato. Tutta la configurazione e il contenuto.</div><svg class="gd" viewBox="0 0 19.5 18"><path d="M6.3 0.3h6.8l6.4 11.4h-6.9z" fill="#f9c73a"/><path d="M6.3 0.3L9.8 6.4 3.7 18 0 11.7z" fill="#1aa05a"/><path d="M6.5 11.7h13l-3.6 6.3H3.7z" fill="#2f73e6"/></svg><div class="c nt">Incrementale.</div><div class="c sz"><span class="dot lnk">+1.11 GB</span></div><svg class="dl" viewBox="0 0 18 21"><path d="M5.8 0h6.4v10.5H18L9 20.6 0 10.5h5.8z" fill="#72bf1e"/></svg></div>
<div class="row" style="top:1545.56px"><div class="cb" style="top:12.5px"></div><svg class="ok" viewBox="0 0 20 20"><circle cx="10" cy="10" r="10" fill="#80b026"/><path d="M5.5 10.4l3.3 3.8 5.9-7.5" fill="none" stroke="#fff" stroke-width="2.5" stroke-linejoin="round"/></svg><div class="c dt lnk">25/Gen/2024 23.11</div><div class="c cm">Backup pianificato. Tutta la configurazione e il contenuto.</div><svg class="gd" viewBox="0 0 19.5 18"><path d="M6.3 0.3h6.8l6.4 11.4h-6.9z" fill="#f9c73a"/><path d="M6.3 0.3L9.8 6.4 3.7 18 0 11.7z" fill="#1aa05a"/><path d="M6.5 11.7h13l-3.6 6.3H3.7z" fill="#2f73e6"/></svg><div class="c nt">Incrementale.</div><div class="c sz"><span class="dot lnk">+1.21 GB</span></div><svg class="dl" viewBox="0 0 18 21"><path d="M5.8 0h6.4v10.5H18L9 20.6 0 10.5h5.8z" fill="#72bf1e"/></svg></div>
<div class="abs" style="left:278px;top:750px;width:19.5px;height:108px;background:#e6e6e6;border-radius:0 5px 5px 0"></div>
<svg class="abs" style="left:283px;top:799px" width="8" height="12" viewBox="0 0 8 12" fill="none" stroke="#333" stroke-width="1.3"><path d="M6.5 1L1.5 6l5 5"/></svg>
</div>
</body></html>
